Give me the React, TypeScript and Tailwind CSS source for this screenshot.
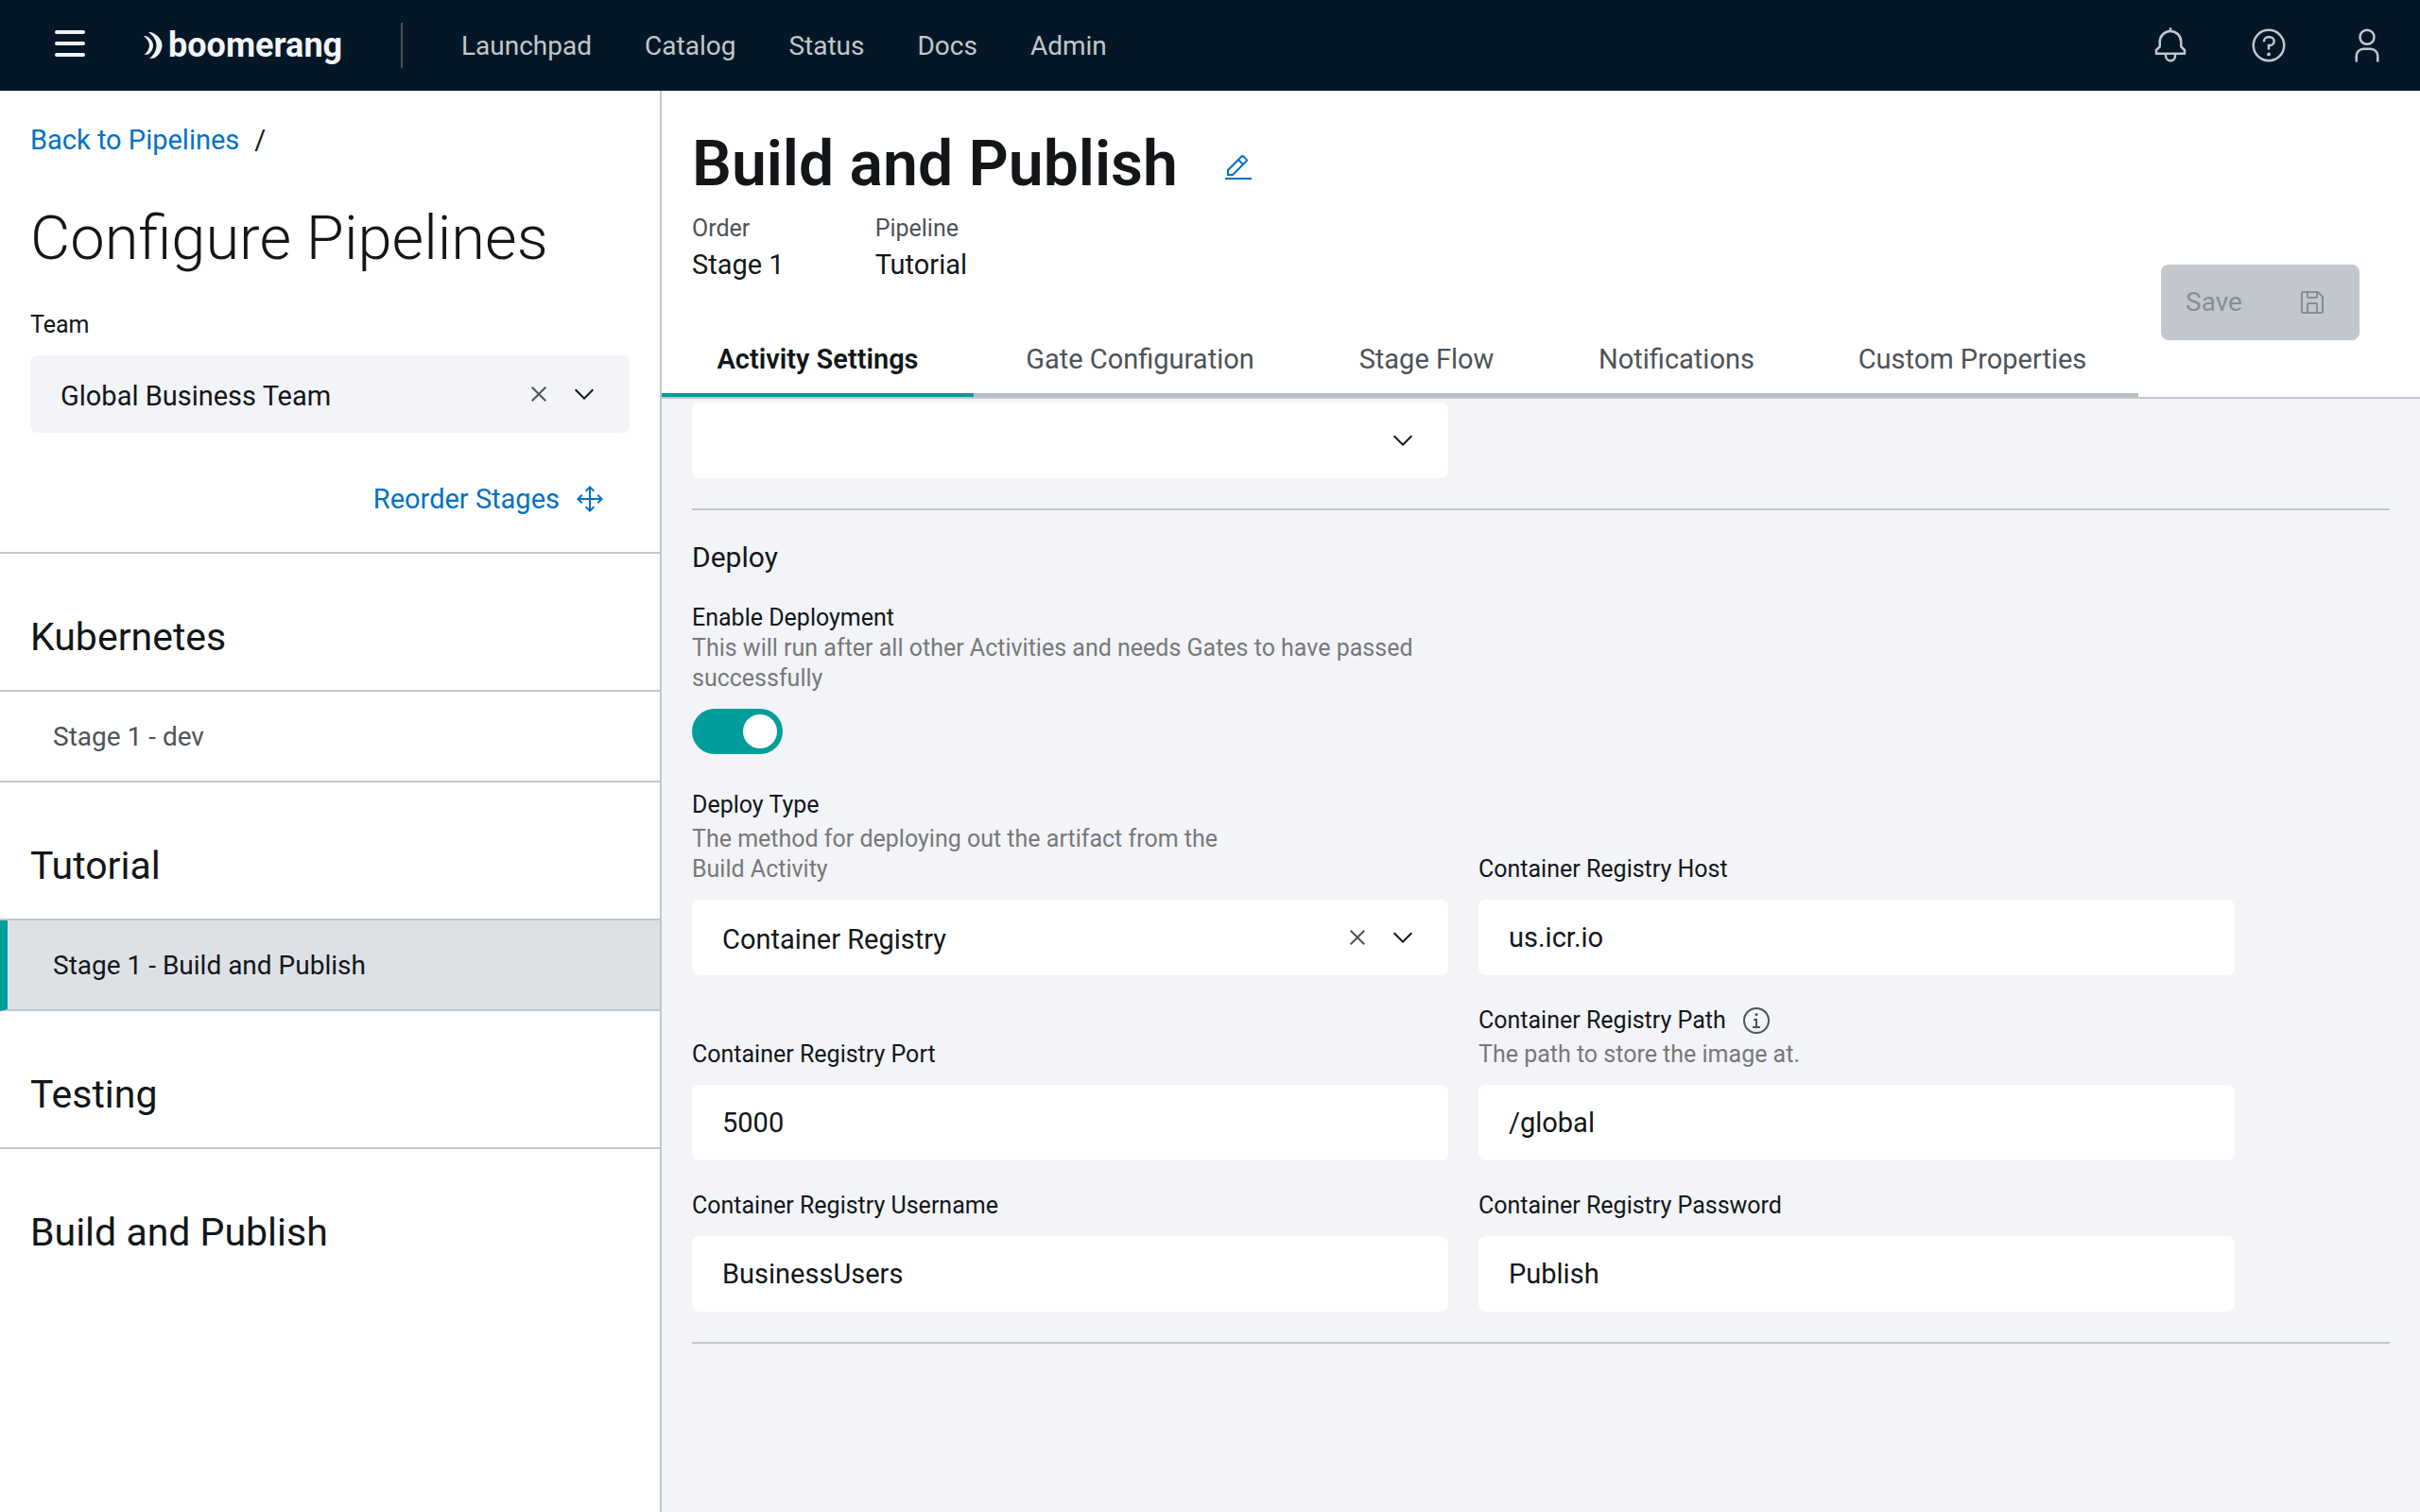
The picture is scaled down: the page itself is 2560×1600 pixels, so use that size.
import React, { useState } from "react";

type IconProps = { className?: string };

function Icon({ className = "size-8", box = "0 0 32 32", children }: { className?: string; box?: string; children: React.ReactNode }) {
  return (
    <svg viewBox={box} fill="currentColor" aria-hidden="true" className={`shrink-0 ${className}`}>
      {children}
    </svg>
  );
}

const BellIcon = ({ className }: IconProps) => (
  <Icon className={className}>
    <path d="M28.7071,19.293,26,16.5859V13a10.0136,10.0136,0,0,0-9-9.9492V1H15V3.0508A10.0136,10.0136,0,0,0,6,13v3.5859L3.2929,19.293A1,1,0,0,0,3,20v3a1,1,0,0,0,1,1h7v.7768a5.152,5.152,0,0,0,4.5,5.1987A5.0057,5.0057,0,0,0,21,25V24h7a1,1,0,0,0,1-1V20A1,1,0,0,0,28.7071,19.293ZM19,25a3,3,0,0,1-6,0V24h6Zm8-3H5V20.4141L7.707,17.707A1,1,0,0,0,8,17V13a8,8,0,0,1,16,0v4a1,1,0,0,0,.293.707L27,20.4141Z" />
  </Icon>
);
const HelpIcon = ({ className }: IconProps) => (
  <Icon className={className}>
    <path d="M16,2A14,14,0,1,0,30,16,14,14,0,0,0,16,2Zm0,26A12,12,0,1,1,28,16,12,12,0,0,1,16,28Z" />
    <circle cx="16" cy="23.5" r="1.5" />
    <path d="M17,8H15.5A4.49,4.49,0,0,0,11,12.5V13h2v-.5A2.5,2.5,0,0,1,15.5,10H17a2.5,2.5,0,0,1,0,5H15v4.5h2V17a4.5,4.5,0,0,0,0-9Z" />
  </Icon>
);
const UserIcon = ({ className }: IconProps) => (
  <Icon className={className}>
    <path d="M16,4a5,5,0,1,1-5,5,5,5,0,0,1,5-5m0-2a7,7,0,1,0,7,7A7,7,0,0,0,16,2Z" />
    <path d="M26,30H24V25a5,5,0,0,0-5-5H13a5,5,0,0,0-5,5v5H6V25a7,7,0,0,1,7-7h6a7,7,0,0,1,7,7Z" />
  </Icon>
);
const SaveIcon = () => (
  <Icon>
    <path d="M27.71,9.29l-5-5A1,1,0,0,0,22,4H6A2,2,0,0,0,4,6V26a2,2,0,0,0,2,2H26a2,2,0,0,0,2-2V10A1,1,0,0,0,27.71,9.29ZM12,6h8v4H12Zm8,20H12V18h8Zm2,0V18a2,2,0,0,0-2-2H12a2,2,0,0,0-2,2v8H6V6h4v4a2,2,0,0,0,2,2h8a2,2,0,0,0,2-2V6.41l4,4V26Z" />
  </Icon>
);
const EditIcon = () => (
  <Icon>
    <path d="M2 26H30V28H2z" />
    <path d="M25.4,9c0.8-0.8,0.8-2,0-2.8c0,0,0,0,0,0l-3.6-3.6c-0.8-0.8-2-0.8-2.8,0c0,0,0,0,0,0l-15,15V24h6.4L25.4,9z M20.4,4L24,7.6l-3,3L17.4,7L20.4,4z M6,22v-3.6l10-10l3.6,3.6l-10,10H6z" />
  </Icon>
);
const MoveIcon = () => (
  <Icon>
    <path d="M25 11 23.59 12.41 26.17 15 17 15 17 5.83 19.59 8.41 21 7 16 2 11 7 12.41 8.41 15 5.83 15 15 5.83 15 8.41 12.41 7 11 2 16 7 21 8.41 19.59 5.83 17 15 17 15 26.17 12.41 23.59 11 25 16 30 21 25 19.59 23.59 17 26.17 17 17 26.17 17 23.59 19.59 25 21 30 16z" />
  </Icon>
);
const InfoIcon = () => (
  <Icon>
    <path d="M17 22 17 14 13 14 13 16 15 16 15 22 12 22 12 24 20 24 20 22 17 22z" />
    <path d="M16,8a1.5,1.5,0,1,0,1.5,1.5A1.5,1.5,0,0,0,16,8Z" />
    <path d="M16,30A14,14,0,1,1,30,16,14,14,0,0,1,16,30ZM16,4A12,12,0,1,0,28,16,12,12,0,0,0,16,4Z" />
  </Icon>
);
const CloseIcon = () => (
  <Icon>
    <path d="M24 9.4 22.6 8 16 14.6 9.4 8 8 9.4 14.6 16 8 22.6 9.4 24 16 17.4 22.6 24 24 22.6 17.4 16z" />
  </Icon>
);
const ChevronIcon = () => (
  <Icon box="0 0 16 16">
    <path d="M8 11 3 6 3.7 5.3 8 9.6 12.3 5.3 13 6z" />
  </Icon>
);

function Header() {
  return (
    <header className="flex h-24 items-center bg-[#051726] pr-9 pl-[58px] text-[#c1c7cd]">
      <button type="button" aria-label="Open menu" className="flex w-8 flex-col gap-2 pb-1">
        <span className="h-1 rounded-xs bg-[#f2f4f8]" />
        <span className="h-1 rounded-xs bg-[#f2f4f8]" />
        <span className="h-1 rounded-xs bg-[#f2f4f8]" />
      </button>
      <a href="#home" className="ml-[62px] flex w-[212px] items-center gap-1.5 text-[36px] leading-10 font-bold text-[#f2f4f8]">
        <svg viewBox="0 0 20 28" fill="currentColor" aria-hidden="true" className="h-7 w-5">
          <path d="M0 4C2 4 4 4.500 5 5.500C8.500 8 10 11 10 14C10 17.500 8.500 20.500 5 23.500L0.500 24C4 21 6 17.500 6 14C6 10 3.500 7 0 4Z" />
          <path d="M5 0C7 0 9 0 10 1C16 4 19.500 9 19.500 14C19.500 19 16 25 11 27.500L6 28C11 24 13.500 19 13.500 14C13.500 9 10.500 4 5 0Z" />
        </svg>
        boomerang
      </a>
      <span className="ml-15 h-12 w-0.5 bg-[#4a5058]" />
      <nav className="ml-[62px] flex gap-14 pt-0.5 text-[28px] leading-9">
        {["Launchpad", "Catalog", "Status", "Docs", "Admin"].map((item) => (
          <a key={item} href={`#${item.toLowerCase()}`}>
            {item}
          </a>
        ))}
      </nav>
      <div className="ml-auto flex gap-16">
        <button type="button" aria-label="Notifications">
          <BellIcon className="size-10" />
        </button>
        <button type="button" aria-label="Help">
          <HelpIcon className="size-10" />
        </button>
        <button type="button" aria-label="Profile">
          <UserIcon className="size-10" />
        </button>
      </div>
    </header>
  );
}

function Select({ id, value, clearable, tone = "h-20 bg-white", label }: { id: string; value: string; clearable?: boolean; tone?: string; label?: string }) {
  return (
    <div className="relative">
      <select id={id} aria-label={label} defaultValue={value} className={`block w-full appearance-none rounded-lg pt-1 pr-32 pl-8 text-[29px] leading-9 ${tone}`}>
        <option value={value}>{value}</option>
      </select>
      <div className="pointer-events-none absolute inset-y-0 right-8 flex items-center gap-4">
        {clearable && (
          <button type="button" aria-label="Clear selection" className="pointer-events-auto text-[#4d5358]">
            <CloseIcon />
          </button>
        )}
        <ChevronIcon />
      </div>
    </div>
  );
}

const groups = [
  { name: "Kubernetes", stages: [{ name: "Stage 1 - dev", active: false }] },
  { name: "Tutorial", stages: [{ name: "Stage 1 - Build and Publish", active: true }] },
  { name: "Testing", stages: [] },
  { name: "Build and Publish", stages: [] },
];

function Sidebar() {
  return (
    <aside className="w-[700px] shrink-0 border-r-2 border-[#c1c7cd] bg-white">
      <div className="flex flex-col border-b-2 border-[#c1c7cd] px-8 pt-8 pb-[38px]">
        <nav aria-label="Breadcrumb" className="flex gap-4 text-[29px] leading-10">
          <a href="#pipelines" className="text-[#0072c3]">
            Back to Pipelines
          </a>
          <span>/</span>
        </nav>
        <h1 className="mt-11 text-[65px] leading-20 font-light">Configure Pipelines</h1>
        <label htmlFor="team" className="mt-9 mb-4 text-[25px] leading-8">
          Team
        </label>
        <Select id="team" value="Global Business Team" clearable tone="h-[82px] bg-[#f2f4f8]" />
        <button type="button" className="mt-13 mr-[26px] flex items-center gap-4 self-end text-[29px] leading-9 text-[#0072c3]">
          Reorder Stages
          <MoveIcon />
        </button>
      </div>
      {groups.map((group) => (
        <section key={group.name} className="group">
          <h2 className="border-b-2 border-[#c1c7cd] px-8 pt-16 pb-8 text-[41px] leading-12 group-last:border-0">{group.name}</h2>
          {group.stages.map((stage) => (
            <a
              key={stage.name}
              href="#stage"
              className={
                stage.active
                  ? "flex h-24 items-center border-b-2 border-l-8 border-b-[#c1c7cd] border-l-[#009d9a] bg-[#dde1e6] pt-0.5 pl-12 text-[28px]"
                  : "flex h-24 items-center border-b-2 border-[#c1c7cd] pt-0.5 pl-14 text-[28px] text-[#4d5358]"
              }
            >
              {stage.name}
            </a>
          ))}
        </section>
      ))}
    </aside>
  );
}

const tabs = [
  { name: "Activity Settings", width: "w-[330px]" },
  { name: "Gate Configuration", width: "w-[352px]" },
  { name: "Stage Flow", width: "w-[254px]" },
  { name: "Notifications", width: "w-[275px]" },
  { name: "Custom Properties", width: "w-[351px]" },
];

function StageHeader() {
  const [active, setActive] = useState("Activity Settings");
  return (
    <div className="flex items-end justify-between border-b-2 border-[#c1c7cd] bg-white pr-16">
      <div>
        <div className="flex items-center gap-12 px-8 pt-9">
          <h2 className="text-[66px] leading-21 font-semibold">Build and Publish</h2>
          <button type="button" aria-label="Edit stage" className="mt-2 text-[#0072c3]">
            <EditIcon />
          </button>
        </div>
        <dl className="flex gap-24 px-8 pt-2">
          <div>
            <dt className="text-[25px] leading-9 text-[#4d5358]">Order</dt>
            <dd className="text-[29px] leading-10">Stage 1</dd>
          </div>
          <div>
            <dt className="text-[25px] leading-9 text-[#4d5358]">Pipeline</dt>
            <dd className="text-[29px] leading-10">Tutorial</dd>
          </div>
        </dl>
        <div role="tablist" className="mt-12 flex text-[29px] leading-16">
          {tabs.map((tab) => (
            <button
              key={tab.name}
              type="button"
              role="tab"
              aria-selected={tab.name === active}
              onClick={() => setActive(tab.name)}
              className={`${tab.width} whitespace-nowrap border-b-4 pb-1 ${
                tab.name === active ? "border-[#009d9a] font-semibold" : "border-[#b6bcc4] text-[#4d5358]"
              }`}
            >
              {tab.name}
            </button>
          ))}
        </div>
      </div>
      <button type="button" disabled className="mb-15 flex h-20 w-[210px] items-center justify-between rounded-lg bg-[#c1c7cd] pr-[34px] pl-[26px] text-[28px] text-[#878d96]">
        Save
        <SaveIcon />
      </button>
    </div>
  );
}

function Field({ id, label, hint, info, children }: { id: string; label: string; hint?: string; info?: boolean; children: React.ReactNode }) {
  return (
    <div className="flex flex-col justify-end">
      <div className="flex items-center gap-4">
        <label htmlFor={id} className="text-[25px] leading-8">
          {label}
        </label>
        {info && (
          <button type="button" aria-label={`About ${label}`} className="text-[#4d5358]">
            <InfoIcon />
          </button>
        )}
      </div>
      {hint && <p className="mt-1 max-w-[600px] text-[25px] leading-8 text-[#787878]">{hint}</p>}
      <div className="mt-4">{children}</div>
    </div>
  );
}

function TextField({ id, label, value, hint, info }: { id: string; label: string; value: string; hint?: string; info?: boolean }) {
  return (
    <Field id={id} label={label} hint={hint} info={info}>
      <input id={id} type="text" defaultValue={value} className="block h-20 w-full rounded-lg bg-white px-8 text-[29px] leading-9" />
    </Field>
  );
}

function DeploySettings() {
  return (
    <div className="grow bg-[#f2f4f8] px-8 pt-1">
      <div className="grid max-w-[1632px] grid-cols-2 gap-8">
        <Select id="test-type" value="" label="Test type" />
      </div>
      <hr className="mt-8 border-t-2 border-[#c1c7cd]" />
      <h3 className="mt-[30px] text-[30px] leading-10">Deploy</h3>
      <div className="mt-7 max-w-[800px]">
        <label htmlFor="enable-deployment" className="block text-[25px] leading-8">
          Enable Deployment
        </label>
        <p className="text-[25px] leading-8 text-[#787878]">
          This will run after all other Activities and needs Gates to have passed successfully
        </p>
        <input
          id="enable-deployment"
          type="checkbox"
          role="switch"
          defaultChecked
          className="mt-4 block h-12 w-24 appearance-none rounded-full bg-[#8d8d8d] p-1.5 before:block before:size-9 before:rounded-full before:bg-white checked:bg-[#009d9a] checked:before:ml-auto"
        />
      </div>
      <div className="mt-[38px] grid max-w-[1632px] grid-cols-2 gap-8">
        <Field id="deploy-type" label="Deploy Type" hint="The method for deploying out the artifact from the Build Activity">
          <Select id="deploy-type" value="Container Registry" clearable />
        </Field>
        <TextField id="host" label="Container Registry Host" value="us.icr.io" />
        <TextField id="port" label="Container Registry Port" value="5000" />
        <TextField id="path" label="Container Registry Path" value="/global" hint="The path to store the image at." info />
        <TextField id="username" label="Container Registry Username" value="BusinessUsers" />
        <TextField id="password" label="Container Registry Password" value="Publish" />
      </div>
      <hr className="mt-8 border-t-2 border-[#c1c7cd]" />
    </div>
  );
}

export default function App() {
  return (
    <div className="flex min-h-screen flex-col font-[Roboto,sans-serif] text-[#121619]">
      <Header />
      <div className="flex grow">
        <Sidebar />
        <main className="flex min-w-0 grow flex-col">
          <StageHeader />
          <DeploySettings />
        </main>
      </div>
    </div>
  );
}
